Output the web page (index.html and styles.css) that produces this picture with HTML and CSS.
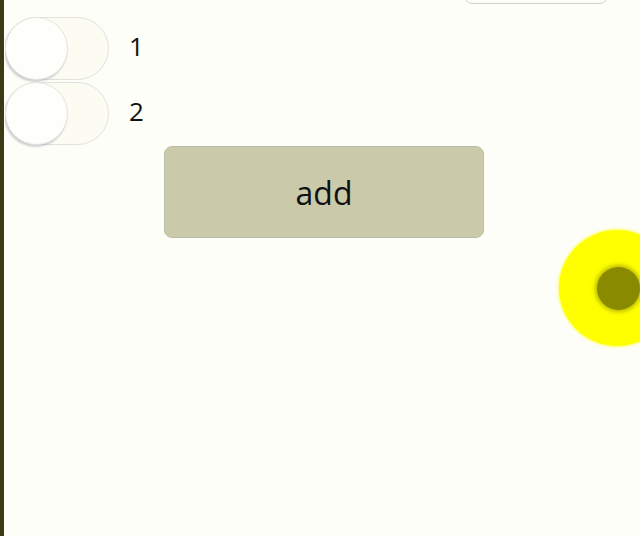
FILE: index.html
```html
<!DOCTYPE html>
<html lang="en">
<head>
  <meta charset="UTF-8">
  <meta name="viewport" content="width=device-width, initial-scale=1.0">
  <title>Toggles</title>
  <link rel="stylesheet" href="styles.css">
</head>
<body>
  <div class="page">
    <div class="top-box"></div>

    <div class="list">
      <label class="row">
        <span class="toggle"><span class="knob"></span></span>
        <span class="label">1</span>
      </label>
      <label class="row">
        <span class="toggle"><span class="knob"></span></span>
        <span class="label">2</span>
      </label>
    </div>

    <button class="add-btn" type="button">add</button>

    <div class="touch"><div class="touch-dot"></div></div>
  </div>
</body>
</html>
```

FILE: styles.css
```css
* {
  margin: 0;
  padding: 0;
  box-sizing: border-box;
}
body {
  font-family: 'Open Sans', 'Noto Sans', sans-serif;
  background: #fefef9;
  color: #111;
  height: 536px;
  overflow: hidden;
  border-left: 4px solid #3a3a14;
}
.page {
  position: relative;
  display: flex;
  flex-direction: column;
  height: 100%;
  overflow: hidden;
  border-left: 1px solid #fefef9;
}
.top-box {
  align-self: flex-end;
  margin-right: 31px;
  margin-top: -40px;
  width: 146px;
  height: 44px;
  border: 1px solid #cfcfd4;
  border-radius: 10px;
}
.list {
  display: flex;
  flex-direction: column;
  gap: 2px;
  margin-top: 13px;
}
.row {
  display: flex;
  align-items: center;
  gap: 20px;
  height: 63px;
}
.toggle {
  position: relative;
  width: 104px;
  height: 63px;
  border: 1px solid #e2e2dc;
  border-radius: 32px;
  background: #fcfcf3;
}
.knob {
  position: absolute;
  left: -1px;
  top: -1px;
  width: 63px;
  height: 63px;
  border-radius: 50%;
  background: #fefefa;
  border: 1px solid #e4e4de;
  box-shadow: -1px 2px 2px rgba(120, 120, 140, 0.35);
}
.label {
  font-size: 26px;
  line-height: 1;
  padding-bottom: 6px;
}
.add-btn {
  align-self: flex-start;
  margin-left: 159px;
  margin-top: 1px;
  width: 320px;
  height: 92px;
  border: 1px solid #bdbda0;
  border-radius: 8px;
  background: #cacaab;
  font-family: 'Open Sans', 'Noto Sans', sans-serif;
  font-size: 32px;
  color: #111;
}
.touch {
  position: absolute;
  left: 554px;
  top: 230px;
  width: 116px;
  height: 116px;
  border-radius: 50%;
  background: #ffff00;
  box-shadow: 0 0 3px 1px rgba(255, 255, 0, 0.6);
}
.touch-dot {
  position: absolute;
  left: 38px;
  top: 37px;
  width: 43px;
  height: 43px;
  border-radius: 50%;
  background: #8a8a00;
  box-shadow: 0 0 4px 2px rgba(138, 138, 0, 0.6);
}
```
